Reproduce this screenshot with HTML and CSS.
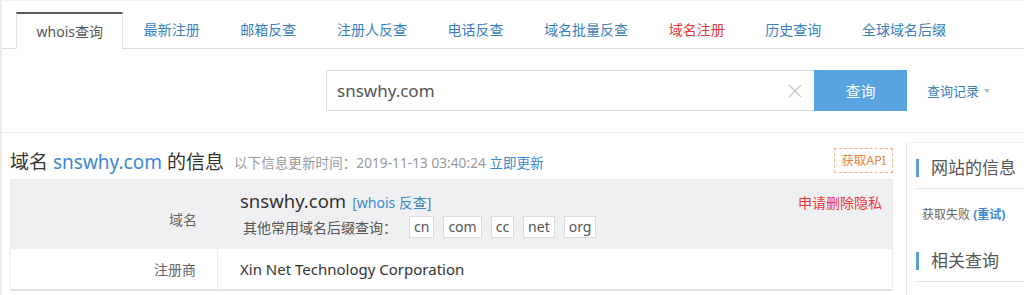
FILE: index.html
```html
<!DOCTYPE html>
<html>
<head>
<meta charset="utf-8">
<link rel="stylesheet" href="styles.css">
</head>
<body>
<div class="page">
  <div class="tabs">
    <div class="tab active">whois查询</div>
    <div class="tab">最新注册</div>
    <div class="tab">邮箱反查</div>
    <div class="tab">注册人反查</div>
    <div class="tab">电话反查</div>
    <div class="tab">域名批量反查</div>
    <div class="tab red">域名注册</div>
    <div class="tab">历史查询</div>
    <div class="tab">全球域名后缀</div>
  </div>

  <div class="search-row">
    <div class="search-box">
      <span class="search-text">snswhy.com</span>
      <span class="clear">
        <svg width="14" height="14" viewBox="0 0 14 14"><path d="M1 1 L13 13 M13 1 L1 13" stroke="#c4c4c4" stroke-width="1.3" fill="none"/></svg>
      </span>
    </div>
    <div class="search-btn">查询</div>
    <div class="history">查询记录<span class="caret"></span></div>
  </div>

  <div class="content">
    <div class="main">
      <div class="title-row">
        <div class="title">域名 <span class="blue">snswhy.com</span> 的信息</div>
        <div class="update">以下信息更新时间：2019-11-13 03:40:24 <span class="blue">立即更新</span></div>
        <div class="api">获取API</div>
      </div>
      <div class="table">
        <div class="row gray">
          <div class="label">域名</div>
          <div class="value">
            <div class="line1">
              <span class="domain">snswhy.com</span>
              <span class="whois-link">[whois 反查]</span>
              <span class="privacy">申请删除隐私</span>
            </div>
            <div class="line2">
              <span class="suffix-label">其他常用域名后缀查询：</span>
              <span class="sfx">cn</span><span class="sfx">com</span><span class="sfx">cc</span><span class="sfx">net</span><span class="sfx">org</span>
            </div>
          </div>
        </div>
        <div class="row">
          <div class="label">注册商</div>
          <div class="value reg">Xin Net Technology Corporation</div>
        </div>
      </div>
    </div>
    <div class="side">
      <div class="side-head">网站的信息</div>
      <div class="side-body">获取失败 <span class="retry">(重试)</span></div>
      <div class="side-head second">相关查询</div>
    </div>
  </div>
</div>
</body>
</html>
```

FILE: styles.css
```css
* { box-sizing: border-box; }
html, body { margin: 0; padding: 0; background: #fff; }
body {
  font-family: "Noto Sans", "Noto Sans CJK SC", sans-serif;
  color: #333;
  width: 1024px;
  height: 295px;
  overflow: hidden;
}
.page {
  width: 1024px;
  height: 295px;
  border-left: 2px solid #ececec;
  border-top: 1px solid #f0f0f0;
  overflow: hidden;
}
.tabs {
  display: flex;
  margin-top: 11px;
  padding-left: 14px;
  height: 37px;
  border-bottom: 1px solid #dcdcdc;
}
.tab {
  padding: 0 20.3px;
  font-size: 14px;
  line-height: 35px;
  color: #3a7fc0;
  white-space: nowrap;
}
.tab.active {
  color: #555;
  border-top: 2px solid #555860;
  border-left: 1px solid #e2e2e2;
  border-right: 1px solid #e2e2e2;
  background: #fff;
  height: 37px;
  margin-bottom: -1px;
  padding: 0 19.5px;
}
.tab.red { color: #e4393c; }

.search-row {
  display: flex;
  align-items: center;
  margin-top: 21px;
  padding-left: 324px;
  height: 41px;
}
.search-box {
  width: 488px;
  height: 41px;
  border: 1px solid #dcdcdc;
  border-right: none;
  display: flex;
  align-items: center;
  justify-content: space-between;
  padding: 0 12px 0 10px;
}
.search-text {
  font-size: 17px;
  color: #555;
}
.clear { display: flex; align-items: center; }
.search-btn {
  width: 93px;
  height: 41px;
  background: #59a3e0;
  color: #fff;
  font-size: 15px;
  display: flex;
  align-items: center;
  justify-content: center;
}
.history {
  margin-left: 20px;
  font-size: 13px;
  color: #3a7fc0;
  display: flex;
  align-items: center;
}
.caret {
  display: inline-block;
  margin-left: 5px;
  width: 0; height: 0;
  border-left: 3.5px solid transparent;
  border-right: 3.5px solid transparent;
  border-top: 4px solid #bbb;
}

.content {
  margin-top: 21px;
  border-top: 1px solid #eeeeee;
  display: flex;
  padding-left: 8px;
}
.main {
  width: 883px;
  padding-top: 14px;
}
.title-row {
  display: flex;
  align-items: center;
  height: 26px;
}
.title {
  font-size: 19px;
  color: #333;
  white-space: nowrap;
  margin-top: 1px;
}
.blue { color: #3d88cf; }
.update {
  margin-left: 10px;
  font-size: 13.5px;
  color: #999;
  margin-top: 3px;
  white-space: nowrap;
  letter-spacing: 0.1px;
}
.update .blue { color: #3d88cf; }
.api {
  margin-left: auto;
  margin-right: 0;
  border: 1px dashed #e8b48a;
  color: #e8873a;
  font-size: 12.5px;
  height: 25px;
  line-height: 23px;
  padding: 0 6px;
}
.table {
  margin-top: 6px;
  border: 1px solid #ececec;
  border-bottom: 2px solid #e3e3e3;
}
.row {
  display: flex;
}
.row.gray {
  background: #f0f0f2;
  height: 69px;
}
.label {
  width: 207px;
  text-align: right;
  padding-right: 21px;
  font-size: 14px;
  color: #666;
  display: flex;
  align-items: center;
  justify-content: flex-end;
  flex-shrink: 0;
}
.row.gray .label { padding-top: 8px; }
.row + .row .label { border-right: 1px solid #ececec; }
.value {
  flex: 1;
  padding-left: 22px;
}
.line1 {
  display: flex;
  align-items: baseline;
  margin-top: 8px;
  height: 28px;
}
.domain { font-size: 18.5px; color: #333; }
.whois-link { font-size: 14px; color: #3d88cf; margin-left: 6px; }
.privacy {
  margin-left: auto;
  margin-right: 10px;
  font-size: 14px;
  color: #e4393c;
}
.line2 {
  display: flex;
  align-items: center;
  margin-top: 0;
  padding-left: 3px;
}
.suffix-label { font-size: 14px; color: #555; margin-right: 12px; }
.sfx {
  background: #fff;
  border: 1px solid #dcdcdc;
  font-size: 14px;
  color: #555;
  height: 22px;
  line-height: 20px;
  padding: 0 4px;
  margin-right: 9px;
}
.row + .row { height: 40px; }
.value.reg {
  display: flex;
  align-items: center;
  font-size: 15px;
  color: #333;
  padding-left: 22px;
}

.side {
  margin-left: 13px;
  margin-top: 9px;
  flex: 1;
  border-left: 1px solid #e6e6e6;
  border-top: 1px solid #f2f2f2;
  padding-left: 9px;
  height: 200px;
}
.side-head {
  margin-top: 16px;
  font-size: 17px;
  color: #555;
  padding-left: 12px;
  border-left: 3px solid #5a9fd0;
  line-height: 18px;
  height: 18px;
  position: relative;
}
.side-head::after {
  content: "";
  position: absolute;
  left: -3px;
  right: 0;
  top: 29px;
  border-bottom: 1px solid #e3e3e3;
}
.side-body {
  margin-top: 28px;
  font-size: 12px;
  color: #666;
  padding-left: 6px;
}
.retry { color: #3d88cf; font-weight: bold; }
.side-head.second { margin-top: 29px; }
```
